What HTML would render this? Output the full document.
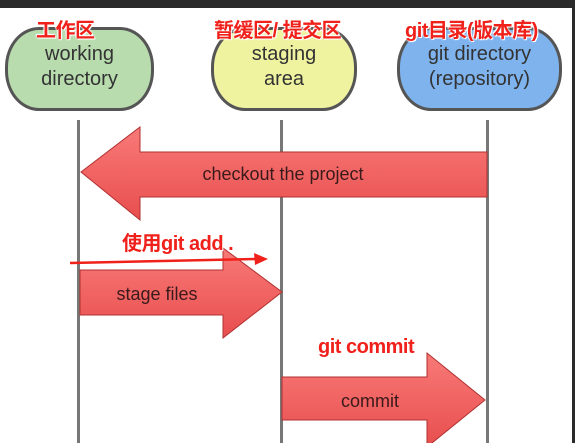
<!DOCTYPE html>
<html><head><meta charset="utf-8"><style>
html,body{margin:0;padding:0;}
body{width:575px;height:443px;overflow:hidden;background:#fff;position:relative;font-family:"Liberation Sans","Noto Sans CJK SC",sans-serif;}
.pill{position:absolute;top:27px;height:84px;border:3px solid #555;border-radius:34px/40px;box-sizing:border-box;text-align:center;color:#333;font-size:20px;line-height:25px;padding-top:12px;}
.lbl{position:absolute;color:#f0201a;font-weight:bold;font-size:20px;text-shadow:0 0 2px #fff,0 0 2px #fff,1px 1px 0 #fff,-1px -1px 0 #fff;white-space:nowrap;letter-spacing:-0.5px;}
</style></head><body>
<div style="position:absolute;left:0;top:0;width:575px;height:8px;background:#2a2a2a"></div>
<div style="position:absolute;right:0;top:0;width:3px;height:443px;background:#2a2a2a"></div>
<div class="pill" style="left:5px;width:149px;background:#b8dcae">working<br>directory</div>
<div class="pill" style="left:211px;width:146px;background:#eff3a0">staging<br>area</div>
<div class="pill" style="left:397px;width:165px;background:#7eb3ee">git directory<br>(repository)</div>
<div class="lbl" style="left:36px;top:14px">工作区</div>
<div class="lbl" style="left:214px;top:14px">暂缓区/ 提交区</div>
<div class="lbl" style="left:405px;top:14px">git目录(版本库)</div>
<svg style="position:absolute;left:0;top:0" width="575" height="443">
<defs><linearGradient id="g" x1="0" y1="0" x2="0" y2="1"><stop offset="0" stop-color="#f87a78"/><stop offset="1" stop-color="#e84e4e"/></linearGradient></defs>
<g fill="#777"><rect x="77" y="120" width="3" height="323"/><rect x="280" y="120" width="3" height="323"/><rect x="486" y="120" width="3" height="323"/></g>
<g fill="url(#g)" stroke="#b03030" stroke-width="1">
<polygon points="81,172 140,127 140,152 487,152 487,197 140,197 140,220"/>
<polygon points="80,270 223,270 223,248 282,292 223,338 223,315 80,315"/>
<polygon points="282,377 427,377 427,353 485,400 427,447 427,420 282,420"/>
</g>
<g font-family="Liberation Sans,sans-serif" font-size="18" fill="#3a1a1a" text-anchor="middle">
<text x="283" y="180">checkout the project</text>
<text x="157" y="300">stage files</text>
<text x="370" y="407">commit</text>
</g>
<line x1="70" y1="263" x2="256" y2="259" stroke="#f0201a" stroke-width="2.5"/>
<polygon points="268,259 254,253 255,265" fill="#f0201a"/>
</svg>
<div class="lbl" style="left:122px;top:227px">使用git add .</div>
<div class="lbl" style="left:318px;top:336px">git commit</div>
</body></html>
